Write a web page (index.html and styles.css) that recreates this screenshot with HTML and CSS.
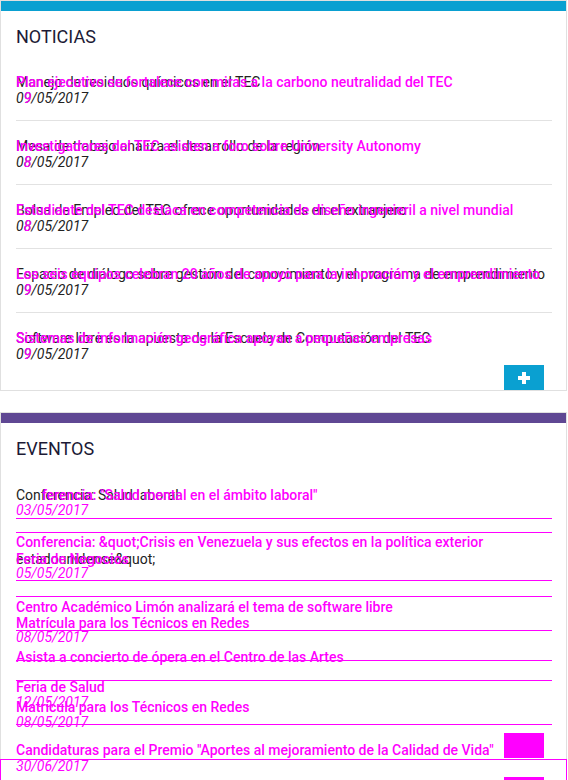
FILE: index.html
```html
<!DOCTYPE html>
<html lang="es">
<head>
<meta charset="utf-8">
<title>Noticias y Eventos</title>
<link rel="stylesheet" href="styles.css">
</head>
<body>
<section class="card card-news">
  <div class="card-bar"></div>
  <div class="card-body">
    <h2 class="card-title">NOTICIAS</h2>
    <ul class="news-list">
      <li class="news-item">
        <div class="stack">
          <span class="txt base">Manejo de residuos químicos en el TEC</span>
          <span class="txt diff">Plan ejecutivo se fortalece con miras a la carbono neutralidad del TEC</span>
        </div>
        <div class="stack">
          <span class="date base">09/05/2017</span>
          <span class="date diff"><span class="ghost">0</span>9</span>
        </div>
      </li>
      <li class="news-item">
        <div class="stack">
          <span class="txt base">Mesa de trabajo analiza el desarrollo de la región</span>
          <span class="txt diff">Investigadores del TEC asisten a foro sobre University Autonomy</span>
        </div>
        <div class="stack">
          <span class="date base">08/05/2017</span>
          <span class="date diff"><span class="ghost">0</span>8</span>
        </div>
      </li>
      <li class="news-item">
        <div class="stack">
          <span class="txt base">Bolsa de Empleo del TEC ofrece oportunidades en el extranjero</span>
          <span class="txt diff">Estudiante del TEC destaca en competencia de diseño ingenieril a nivel mundial</span>
        </div>
        <div class="stack">
          <span class="date base">08/05/2017</span>
          <span class="date diff"><span class="ghost">0</span>8</span>
        </div>
      </li>
      <li class="news-item">
        <div class="stack">
          <span class="txt base">Espacio de diálogo sobre gestión del conocimiento y el programa de emprendimiento</span>
          <span class="txt diff">Los seis equipos celebran 20 años de apoyo para la innovación y el emprendimiento</span>
        </div>
        <div class="stack">
          <span class="date base">09/05/2017</span>
          <span class="date diff"><span class="ghost">0</span>9</span>
        </div>
      </li>
      <li class="news-item">
        <div class="stack">
          <span class="txt base">Software libre es la apuesta de la Escuela de Computación del TEC</span>
          <span class="txt diff">Sistemas de información geográfica apoyan a pequeñas empresas</span>
        </div>
        <div class="stack">
          <span class="date base">09/05/2017</span>
          <span class="date diff"><span class="ghost">0</span>9</span>
        </div>
      </li>
    </ul>
    <div class="card-foot">
      <button class="add-btn" type="button" aria-label="Más noticias">
        <svg width="12" height="12" viewBox="0 0 12 12"><rect x="4" y="0" width="4" height="12" fill="#fff"/><rect x="0" y="4" width="12" height="4" fill="#fff"/></svg>
      </button>
    </div>
  </div>
</section>

<section class="card card-events">
  <div class="card-bar"></div>
  <div class="card-body">
    <h2 class="card-title">EVENTOS</h2>
    <div class="ev-list">
      <div class="stack ev-row mt-19">
        <span class="txt base">Conferencia: Salud laboral</span>
        <span class="txt diff shift">ferencia: "Salud mental en el ámbito laboral"</span>
      </div>
      <div class="date diff ev-row mt-n1">03/05/2017</div>
      <div class="ev-line"></div>
      <div class="ev-line mt-13"></div>
      <div class="txt diff ev-row mt-1">Conferencia: &amp;quot;Crisis en Venezuela y sus efectos en la política exterior</div>
      <div class="stack ev-row mt-1">
        <span class="txt base">estadounidense&amp;quot;</span>
        <span class="txt diff">Feria de Negocios</span>
      </div>
      <div class="date diff ev-row mt-n2">05/05/2017</div>
      <div class="ev-line mt-n1"></div>
      <div class="ev-line mt-15"></div>
      <div class="txt diff ev-row mt-2">Centro Académico Limón analizará el tema de software libre</div>
      <div class="txt diff ev-row">Matrícula para los Técnicos en Redes</div>
      <div class="ev-line mt-n1"></div>
      <div class="date diff ev-row mt-n2">08/05/2017</div>
      <div class="txt diff ev-row mt-4">Asista a concierto de ópera en el Centro de las Artes</div>
      <div class="ev-line mt-n5"></div>
      <div class="ev-line mt-19"></div>
      <div class="txt diff ev-row mt-n2">Feria de Salud</div>
      <div class="date diff ev-row mt-n1">12/05/2017</div>
      <div class="txt diff ev-row mt-n11">Matrícula para los Técnicos en Redes</div>
      <div class="date diff ev-row mt-n1">08/05/2017</div>
      <div class="ev-line mt-n6"></div>
      <div class="ev-last mt-8">
        <span class="txt diff ev-last-title">Candidaturas para el Premio "Aportes al mejoramiento de la Calidad de Vida"</span>
        <span class="diff-block"></span>
      </div>
      <div class="ev-box">
        <div class="date diff ev-row mt-n2">30/06/2017</div>
        <span class="diff-block ev-box-block"></span>
      </div>
    </div>
  </div>
</section>
</body>
</html>
```
FILE: styles.css
```css
* {
  box-sizing: border-box;
  margin: 0;
  padding: 0;
}

body {
  margin: 0;
  width: 568px;
  height: 780px;
  overflow: hidden;
  background: #ffffff;
  font-family: Roboto, "Liberation Sans", sans-serif;
}

.card {
  width: 567px;
  border: 1px solid #e0e0e0;
  background: #ffffff;
}

.card-bar {
  height: 10px;
}

.card-news .card-bar {
  background: #0aa0d1;
}

.card-events {
  margin-top: 21px;
  border-bottom: 0;
}

.card-events .card-bar {
  background: #5f4793;
}

.card-body {
  padding: 15px 14px 0 15px;
}

.card-title {
  font-size: 18px;
  line-height: 22px;
  font-weight: 400;
  color: #1c1a36;
}

.news-list {
  list-style: none;
  margin-top: 9px;
}

.news-item {
  padding: 17px 0 14px;
  border-bottom: 1px solid #e2e2e2;
}

.news-item:last-child {
  border-bottom: 0;
  padding-bottom: 0;
}

.stack {
  display: grid;
}

.stack > * {
  grid-area: 1 / 1;
}

.txt {
  font-size: 14px;
  line-height: 16px;
  white-space: nowrap;
}

.date {
  font-size: 14px;
  line-height: 16px;
  font-style: italic;
  white-space: nowrap;
}

.base {
  color: #222222;
}

.diff {
  color: #ff00ff;
}

.txt.diff {
  font-weight: 500;
}

.ghost {
  visibility: hidden;
}

.shift {
  padding-left: 26px;
}

.card-foot {
  display: flex;
  justify-content: flex-end;
  padding: 3px 8px 0 0;
}

.add-btn {
  width: 40px;
  height: 25px;
  border: 0;
  background: #0aa0d1;
  display: flex;
  align-items: center;
  justify-content: center;
}

.ev-list {
  padding-top: 8px;
}

.ev-row {
  height: 16px;
}

.ev-line {
  height: 1px;
  background: #ff00ff;
}

.ev-last {
  display: flex;
  justify-content: space-between;
  height: 25px;
  padding-right: 8px;
}

.ev-last-title {
  padding-top: 9px;
}

.diff-block {
  display: block;
  width: 40px;
  height: 25px;
  background: #ff00ff;
}

.ev-box {
  margin: 1px -15px 0 -16px;
  height: 40px;
  border: 1px solid #ff00ff;
  border-bottom: 0;
  padding: 0 22px 0 15px;
  display: flex;
  flex-direction: column;
  align-items: flex-start;
}

.ev-box-block {
  align-self: flex-end;
  margin-top: 3px;
}

.mt-19 { margin-top: 19px; }
.mt-15 { margin-top: 15px; }
.mt-13 { margin-top: 13px; }
.mt-8 { margin-top: 8px; }
.mt-4 { margin-top: 4px; }
.mt-2 { margin-top: 2px; }
.mt-1 { margin-top: 1px; }
.mt-n1 { margin-top: -1px; }
.mt-n2 { margin-top: -2px; }
.mt-n5 { margin-top: -5px; }
.mt-n6 { margin-top: -6px; }
.mt-n11 { margin-top: -11px; }
```
